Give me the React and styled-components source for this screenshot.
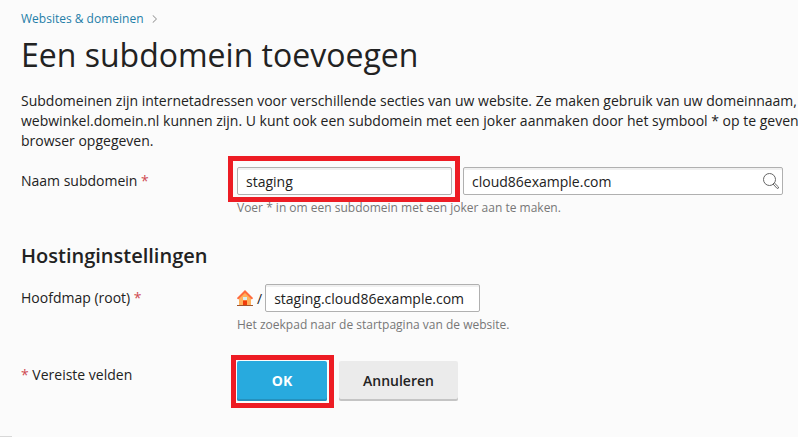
import styled, { createGlobalStyle } from "styled-components";

export default function App() {
  return (
    <Page>
      <GlobalStyle />
      <Breadcrumb>
        <a>Websites &amp; domeinen</a>
        <svg width="6" height="8" viewBox="0 0 6 8">
          <path d="M0.7 0.3 L4.5 4 L0.7 7.7" fill="none" stroke="#888" />
        </svg>
      </Breadcrumb>
      <Title>Een subdomein toevoegen</Title>
      <Intro>
        {intro.map((line) => (
          <p key={line}>{line}</p>
        ))}
      </Intro>

      <Row $height={75}>
        <Label>
          Naam subdomein <Required>*</Required>
        </Label>
        <Field>
          <Controls $gap={11}>
            <Highlight $inset="-11px -8px -7px -9px">
              <Input defaultValue="staging" $width={215} />
            </Highlight>
            <Combo>
              <Input defaultValue="cloud86example.com" $width={320} />
              <Search />
            </Combo>
          </Controls>
          <Hint>Voer * in om een subdomein met een joker aan te maken.</Hint>
        </Field>
      </Row>

      <Subtitle>Hostinginstellingen</Subtitle>
      <Row $height={77}>
        <Label>
          Hoofdmap (root) <Required>*</Required>
        </Label>
        <Field>
          <Controls>
            <House />
            <Slash>/</Slash>
            <Input defaultValue="staging.cloud86example.com" $width={215} />
          </Controls>
          <Hint>Het zoekpad naar de startpagina van de website.</Hint>
        </Field>
      </Row>

      <Row $height={40}>
        <Label>
          <Required>*</Required> Vereiste velden
        </Label>
        <Controls $gap={12}>
          <Highlight $inset="-6px -7px -7px -6px">
            <Button $primary>OK</Button>
          </Highlight>
          <Button>Annuleren</Button>
        </Controls>
      </Row>
      <StatusEdge />
    </Page>
  );
}

function Search() {
  return (
    <SearchIcon width="18" height="18" viewBox="0 0 18 18">
      <circle cx="7.5" cy="7.5" r="6" fill="none" stroke="#666" />
      <path
        d="M11 12 L12.2 10.8 L16.5 15 Q16.8 16.6 15.2 16.5 Z"
        fill="#fff"
        stroke="#666"
      />
    </SearchIcon>
  );
}

function House() {
  return (
    <HouseIcon width="16" height="17" viewBox="0 0 16 17">
      <path d="M2 8 L8 2 L14 8 V15 H2 Z" fill="#ffb05c" />
      <path d="M0.5 8.8 L8 1.5 L15.5 8.8" fill="none" stroke="#ff6a3c" strokeWidth="2" />
      <path d="M6 7 H10 V10 H6 Z" fill="#d9eef2" />
      <path d="M6 10.5 H10 V15 H6 Z" fill="#f03c0a" />
      <path d="M0 15 H16 V16 H0 Z" fill="#a0562e" />
    </HouseIcon>
  );
}

/* ===============================
   Styled Components
================================ */

const GlobalStyle = createGlobalStyle`
  * {
    box-sizing: border-box;
  }

  body {
    margin: 0;
    overflow: hidden;
    background: #fbfbfb;
    color: #222;
    font-family: "Open Sans", sans-serif;
    font-size: 14px;
    line-height: 20px;
  }
`;

const Page = styled.main`
  display: flex;
  flex-direction: column;
  height: 437px;
  padding: 10px 0 0 21px;
  overflow: hidden;
`;

const Breadcrumb = styled.nav`
  display: flex;
  align-items: center;
  gap: 8px;
  height: 18px;
  font-size: 12px;
  color: #1f7ea8;
`;

const Title = styled.h1`
  margin: 6px 0 16px;
  font-size: 32px;
  line-height: 41px;
  font-weight: 400;
`;

const Intro = styled.div`
  white-space: nowrap;
  margin-bottom: 16px;

  p {
    margin: 0;
  }
`;

const Row = styled.div`
  display: flex;
  flex-shrink: 0;
  height: ${({ $height }) => $height}px;
`;

const Label = styled.label`
  width: 216px;
  flex-shrink: 0;
  padding-top: 4px;
`;

const Required = styled.span`
  color: #cf4a52;
`;

const Field = styled.div`
  display: flex;
  flex-direction: column;
`;

const Controls = styled.div`
  display: flex;
  align-items: flex-start;
  gap: ${({ $gap = 0 }) => $gap}px;
`;

/* red marker frame around a control */
const Highlight = styled.div`
  position: relative;
  display: flex;

  &::after {
    content: "";
    position: absolute;
    inset: ${({ $inset }) => $inset};
    border: 5px solid #ed1c24;
    pointer-events: none;
  }
`;

const Input = styled.input`
  width: ${({ $width }) => $width}px;
  height: 28px;
  padding: 1px 8px 0;
  border: 1px solid #b0b0b0;
  border-radius: 2px;
  background: #fff;
  box-shadow: inset 0 2px 0 #f0f0f0;
  color: #222;
  font: inherit;
  outline: none;
`;

const Combo = styled.div`
  position: relative;
  display: flex;
`;

const SearchIcon = styled.svg`
  position: absolute;
  top: 5px;
  right: 3px;
`;

const HouseIcon = styled.svg`
  margin-top: 6px;
`;

const Hint = styled.small`
  margin-top: 3px;
  font-size: 12px;
  line-height: 20px;
  color: #777;
`;

const Slash = styled.span`
  margin: 5px 3px 0 4px;
`;

const Subtitle = styled.h2`
  margin: 0 0 15px;
  font-size: 20px;
  line-height: 27px;
  font-weight: 600;
`;

const Button = styled.button`
  width: ${({ $primary }) => ($primary ? 90 : 119)}px;
  height: 40px;
  padding: 0 0 2px;
  border: 0;
  border-radius: 2px;
  background: ${({ $primary }) => ($primary ? "#28aade" : "#ebebeb")};
  box-shadow: inset 0 -2px 0 ${({ $primary }) => ($primary ? "#2490bd" : "#c4c4c4")};
  color: ${({ $primary }) => ($primary ? "#fff" : "#222")};
  font: ${({ $primary }) => ($primary ? 700 : 600)} 14px "Open Sans", sans-serif;
`;

const StatusEdge = styled.div`
  width: 12px;
  height: 1px;
  margin: auto 0 0 -21px;
  background: #d8d8d8;
`;

/* ===============================
   Page Text
================================ */

const intro = [
  "Subdomeinen zijn internetadressen voor verschillende secties van uw website. Ze maken gebruik van uw domeinnaam,",
  "webwinkel.domein.nl kunnen zijn. U kunt ook een subdomein met een joker aanmaken door het symbool * op te geven",
  "browser opgegeven.",
];
